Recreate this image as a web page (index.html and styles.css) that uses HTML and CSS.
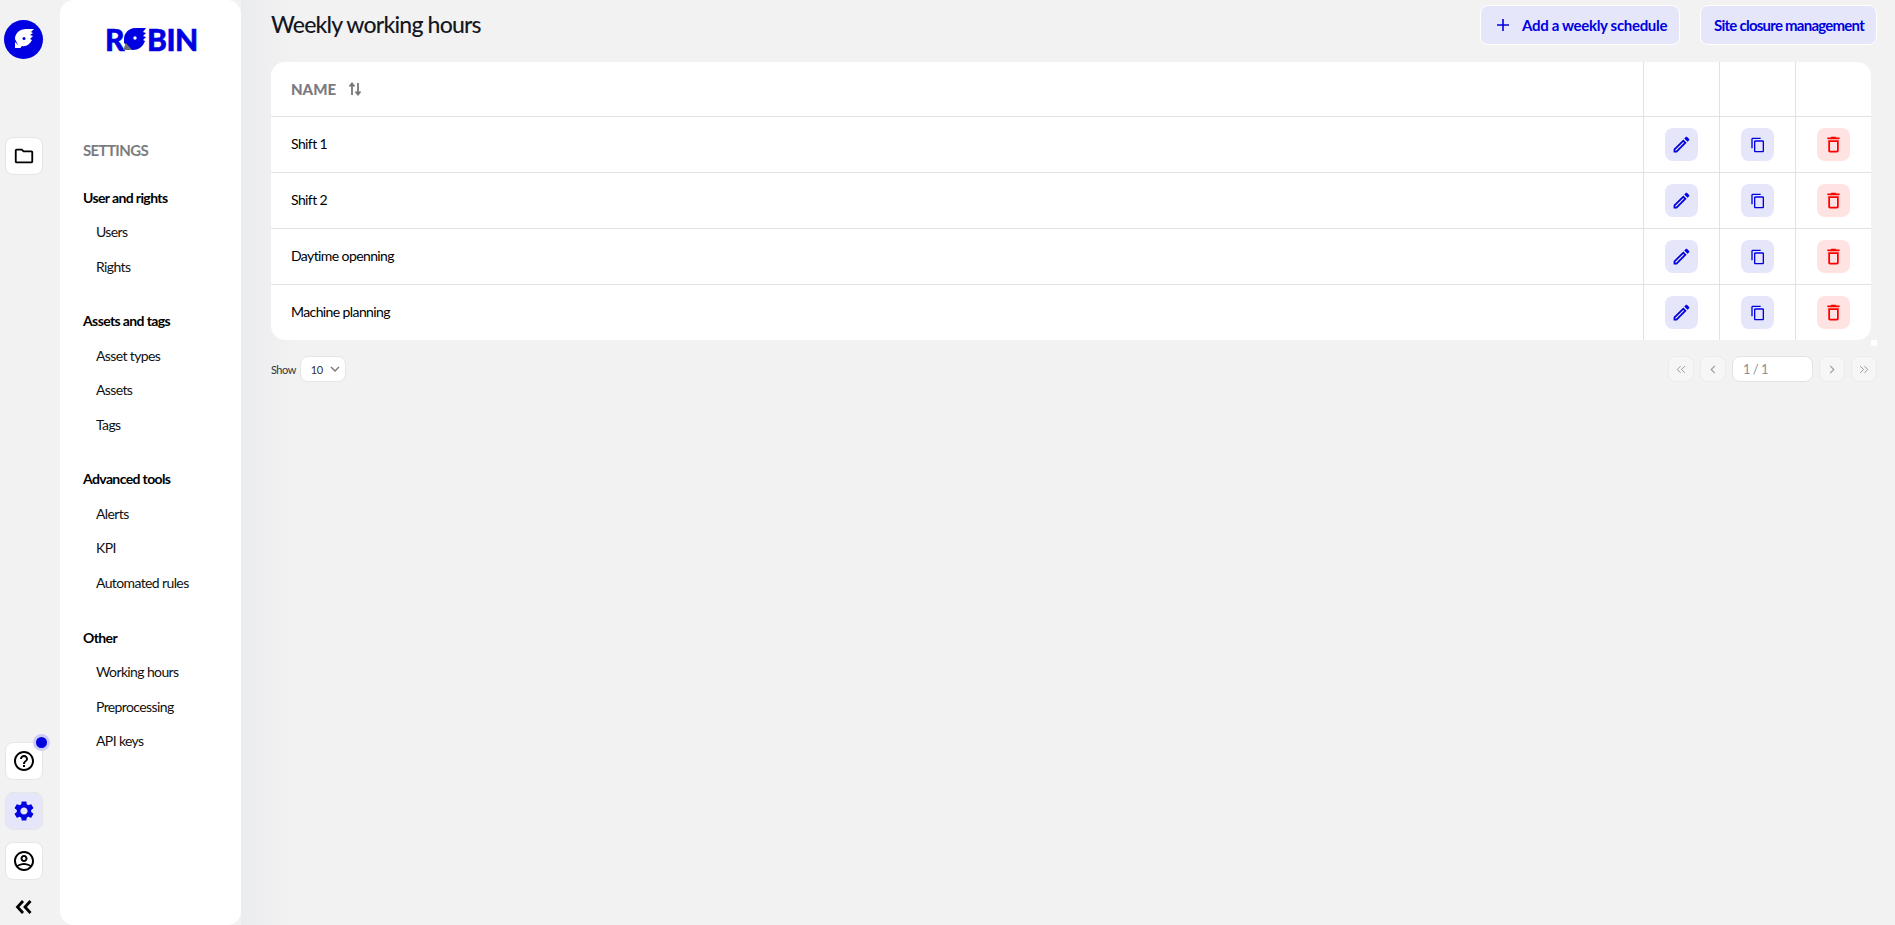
FILE: index.html
```html
<!DOCTYPE html>
<html lang="en">
<head>
    <meta charset="UTF-8">
    <title>Weekly working hours</title>
    <link rel="stylesheet" href="styles.css">
</head>
<body>
<div class="rail">
    <div class="railLogo">
        <svg viewBox="0 0 40 40" width="40" height="40"><circle cx="19.500" cy="19.500" r="19.500" fill="#0000e0"/><path d="M11 19C11 13 16 9 22 9h8l-3 3 2 1-3 2 3 1-3 3 2 1c-2 4-6 7-10 6l-2 2-1-1-3-6z" fill="#fff"/><path d="M11 22l6 6h-6z" fill="#fff"/><circle cx="20" cy="18.500" r="1.500" fill="#0000e0"/></svg>
    </div>
    <div class="railBtn railFolder">
        <svg viewBox="0 0 24 24" width="22" height="22"><path d="M20 6h-8l-2-2H4c-1.100 0-2 .9-2 2v12c0 1.100.9 2 2 2h16c1.100 0 2-.9 2-2V8c0-1.100-.9-2-2-2zm0 12H4V6h5.170l2 2H20v10z"/></svg>
    </div>
    <div class="railBtn railHelp">
        <span class="dot"></span>
        <svg viewBox="0 0 24 24" width="24" height="24"><path d="M11 18h2v-2h-2v2zm1-16C6.480 2 2 6.480 2 12s4.480 10 10 10 10-4.480 10-10S17.520 2 12 2zm0 18c-4.410 0-8-3.590-8-8s3.590-8 8-8 8 3.590 8 8-3.590 8-8 8zm0-14c-2.210 0-4 1.790-4 4h2c0-1.100.9-2 2-2s2 .9 2 2c0 2-3 1.750-3 5h2c0-2.250 3-2.500 3-5 0-2.210-1.790-4-4-4z"/></svg>
    </div>
    <div class="railBtn active">
        <svg viewBox="0 0 24 24" width="24" height="24"><path d="M19.140 12.940c.04-.3.06-.61.06-.94 0-.32-.02-.64-.07-.94l2.030-1.580c.18-.14.23-.41.12-.61l-1.920-3.320c-.12-.22-.37-.29-.59-.22l-2.390.96c-.5-.38-1.030-.7-1.620-.94l-.36-2.540c-.04-.24-.24-.41-.48-.41h-3.840c-.24 0-.43.17-.47.41l-.36 2.540c-.59.24-1.130.57-1.620.94l-2.390-.96c-.22-.08-.47 0-.59.22L2.740 8.870c-.12.21-.08.47.12.61l2.030 1.580c-.05.3-.09.63-.09.94s.02.64.07.94l-2.030 1.580c-.18.14-.23.41-.12.61l1.920 3.320c.12.22.37.29.59.22l2.390-.96c.5.38 1.030.7 1.620.94l.36 2.540c.05.24.24.41.48.41h3.840c.24 0 .44-.17.47-.41l.36-2.540c.59-.24 1.130-.56 1.620-.94l2.390.96c.22.08.47 0 .59-.22l1.920-3.320c.12-.22.07-.47-.12-.61l-2.010-1.580zM12 15.600c-1.980 0-3.600-1.620-3.600-3.600s1.620-3.600 3.600-3.600 3.600 1.620 3.600 3.600-1.620 3.600-3.600 3.600z"/></svg>
    </div>
    <div class="railBtn">
        <svg viewBox="0 0 24 24" width="24" height="24"><path d="M12 2C6.480 2 2 6.480 2 12s4.480 10 10 10 10-4.480 10-10S17.520 2 12 2zm0 2c4.410 0 8 3.590 8 8 0 1.600-.47 3.090-1.290 4.340C16.900 14.900 14.500 14 12 14s-4.900.9-6.710 2.340A7.960 7.960 0 0 1 4 12c0-4.410 3.590-8 8-8zm0 16c-2.300 0-4.370-.97-5.830-2.530C7.600 16.550 9.700 16 12 16s4.400.55 5.830 1.470A7.960 7.960 0 0 1 12 20zm0-14c-1.930 0-3.500 1.570-3.500 3.500S10.070 13 12 13s3.500-1.570 3.500-3.500S13.930 6 12 6zm0 5c-.83 0-1.500-.67-1.500-1.500S11.170 8 12 8s1.500.67 1.500 1.500S12.830 11 12 11z"/></svg>
    </div>
    <div class="railCollapse">
        <svg viewBox="0 0 18 14" width="18" height="14"><path d="M8 1L2.500 7 8 13M15.500 1L10 7l5.500 6" fill="none" stroke="#000" stroke-width="2.800"/></svg>
    </div>
</div>

<div class="sidebar">
    <div class="logo">
        <span>R</span>
        <svg class="logoO" viewBox="0 0 24 22" width="24" height="22"><path d="M1 11C1 5 6 0 12 0h11l-3 4 3 1-3 3 3 1-3 3 2 1c-2 6-7 9-12 9H9L1 15z" fill="#0000e0"/><circle cx="12" cy="10" r="1.700" fill="#fff"/><path d="M0 22l3-7 6 7z" fill="#6b7075"/></svg>
        <span>BIN</span>
    </div>
    <div class="navTitle">SETTINGS</div>
    <div class="navGroup">
        <div class="navHead">User and rights</div>
        <div class="navItem">Users</div>
        <div class="navItem">Rights</div>
    </div>
    <div class="navGroup">
        <div class="navHead">Assets and tags</div>
        <div class="navItem">Asset types</div>
        <div class="navItem">Assets</div>
        <div class="navItem">Tags</div>
    </div>
    <div class="navGroup">
        <div class="navHead">Advanced tools</div>
        <div class="navItem">Alerts</div>
        <div class="navItem">KPI</div>
        <div class="navItem">Automated rules</div>
    </div>
    <div class="navGroup">
        <div class="navHead">Other</div>
        <div class="navItem">Working hours</div>
        <div class="navItem">Preprocessing</div>
        <div class="navItem">API keys</div>
    </div>
</div>

<div class="main">
    <div class="topBar">
        <h1 class="title">Weekly working hours</h1>
        <div class="topBtn addBtn">
            <svg viewBox="0 0 14 14" width="14" height="14"><path d="M7 1v12M1 7h12" fill="none" stroke="#0000e0" stroke-width="1.600"/></svg>
            <span>Add a weekly schedule</span>
        </div>
        <div class="topBtn siteBtn">Site closure management</div>
    </div>

    <div class="tableBox">
        <span class="corner"></span>
        <div class="row headRow">
            <div class="nameCell">
                <span class="nameHead">NAME</span>
                <svg viewBox="0 0 14 14" width="14" height="14"><path d="M4 13V2M1.500 4.500L4 1.500l2.500 3M10 1v11M7.500 9.500l2.500 3 2.500-3" fill="none" stroke="#777" stroke-width="1.800"/></svg>
            </div>
            <div class="actCell"></div>
            <div class="actCell"></div>
            <div class="actCell"></div>
        </div>
        <div class="row">
            <div class="nameCell"><span class="rowName">Shift 1</span></div>
            <div class="actCell"><span class="actBtn"><svg viewBox="0 0 24 24"><path d="M14.060 9.020l.92.92L5.920 19H5v-.92l9.060-9.060M17.660 3c-.25 0-.51.1-.7.29l-1.830 1.830 3.750 3.750 1.830-1.830c.39-.39.39-1.020 0-1.410l-2.340-2.340c-.2-.2-.45-.29-.71-.29zm-3.600 3.190L3 17.250V21h3.750L17.810 9.940l-3.750-3.750z"/></svg></span></div>
            <div class="actCell"><span class="actBtn copy"><svg viewBox="0 0 24 24"><path d="M16 1H4c-1.100 0-2 .9-2 2v14h2V3h12V1zm3 4H8c-1.100 0-2 .9-2 2v14c0 1.100.9 2 2 2h11c1.100 0 2-.9 2-2V7c0-1.100-.9-2-2-2zm0 16H8V7h11v14z"/></svg></span></div>
            <div class="actCell"><span class="actBtn del"><svg viewBox="0 0 24 24"><path d="M6 19c0 1.100.9 2 2 2h8c1.100 0 2-.9 2-2V7H6v12zM8 9h8v10H8V9zm7.500-5l-1-1h-5l-1 1H5v2h14V4z"/></svg></span></div>
        </div>
        <div class="row">
            <div class="nameCell"><span class="rowName">Shift 2</span></div>
            <div class="actCell"><span class="actBtn"><svg viewBox="0 0 24 24"><path d="M14.060 9.020l.92.92L5.920 19H5v-.92l9.060-9.060M17.660 3c-.25 0-.51.1-.7.29l-1.830 1.830 3.750 3.750 1.830-1.830c.39-.39.39-1.020 0-1.410l-2.340-2.340c-.2-.2-.45-.29-.71-.29zm-3.600 3.190L3 17.250V21h3.750L17.810 9.940l-3.750-3.750z"/></svg></span></div>
            <div class="actCell"><span class="actBtn copy"><svg viewBox="0 0 24 24"><path d="M16 1H4c-1.100 0-2 .9-2 2v14h2V3h12V1zm3 4H8c-1.100 0-2 .9-2 2v14c0 1.100.9 2 2 2h11c1.100 0 2-.9 2-2V7c0-1.100-.9-2-2-2zm0 16H8V7h11v14z"/></svg></span></div>
            <div class="actCell"><span class="actBtn del"><svg viewBox="0 0 24 24"><path d="M6 19c0 1.100.9 2 2 2h8c1.100 0 2-.9 2-2V7H6v12zM8 9h8v10H8V9zm7.500-5l-1-1h-5l-1 1H5v2h14V4z"/></svg></span></div>
        </div>
        <div class="row">
            <div class="nameCell"><span class="rowName">Daytime openning</span></div>
            <div class="actCell"><span class="actBtn"><svg viewBox="0 0 24 24"><path d="M14.060 9.020l.92.92L5.920 19H5v-.92l9.060-9.060M17.660 3c-.25 0-.51.1-.7.29l-1.830 1.830 3.750 3.750 1.830-1.830c.39-.39.39-1.020 0-1.410l-2.340-2.340c-.2-.2-.45-.29-.71-.29zm-3.600 3.190L3 17.250V21h3.750L17.810 9.940l-3.750-3.750z"/></svg></span></div>
            <div class="actCell"><span class="actBtn copy"><svg viewBox="0 0 24 24"><path d="M16 1H4c-1.100 0-2 .9-2 2v14h2V3h12V1zm3 4H8c-1.100 0-2 .9-2 2v14c0 1.100.9 2 2 2h11c1.100 0 2-.9 2-2V7c0-1.100-.9-2-2-2zm0 16H8V7h11v14z"/></svg></span></div>
            <div class="actCell"><span class="actBtn del"><svg viewBox="0 0 24 24"><path d="M6 19c0 1.100.9 2 2 2h8c1.100 0 2-.9 2-2V7H6v12zM8 9h8v10H8V9zm7.500-5l-1-1h-5l-1 1H5v2h14V4z"/></svg></span></div>
        </div>
        <div class="row">
            <div class="nameCell"><span class="rowName">Machine planning</span></div>
            <div class="actCell"><span class="actBtn"><svg viewBox="0 0 24 24"><path d="M14.060 9.020l.92.92L5.920 19H5v-.92l9.060-9.060M17.660 3c-.25 0-.51.1-.7.29l-1.830 1.830 3.750 3.750 1.830-1.830c.39-.39.39-1.020 0-1.410l-2.340-2.340c-.2-.2-.45-.29-.71-.29zm-3.600 3.190L3 17.250V21h3.750L17.810 9.940l-3.750-3.750z"/></svg></span></div>
            <div class="actCell"><span class="actBtn copy"><svg viewBox="0 0 24 24"><path d="M16 1H4c-1.100 0-2 .9-2 2v14h2V3h12V1zm3 4H8c-1.100 0-2 .9-2 2v14c0 1.100.9 2 2 2h11c1.100 0 2-.9 2-2V7c0-1.100-.9-2-2-2zm0 16H8V7h11v14z"/></svg></span></div>
            <div class="actCell"><span class="actBtn del"><svg viewBox="0 0 24 24"><path d="M6 19c0 1.100.9 2 2 2h8c1.100 0 2-.9 2-2V7H6v12zM8 9h8v10H8V9zm7.500-5l-1-1h-5l-1 1H5v2h14V4z"/></svg></span></div>
        </div>
    </div>

    <div class="pager">
        <span class="showLabel">Show</span>
        <div class="showSelect">
            <span>10</span>
            <svg viewBox="0 0 10 6" width="10" height="6"><path d="M1 1l4 4 4-4" fill="none" stroke="#777" stroke-width="1.400"/></svg>
        </div>
        <div class="pageNav">
            <span class="pageBtn"><svg viewBox="0 0 12 10" width="10" height="9"><path d="M5.500 1L1.500 5l4 4M10.500 1l-4 4 4 4" fill="none" stroke="#999" stroke-width="1.200"/></svg></span>
            <span class="pageBtn"><svg viewBox="0 0 6 10" width="6" height="9"><path d="M5 1L1 5l4 4" fill="none" stroke="#999" stroke-width="1.200"/></svg></span>
            <span class="pageInput">1 / 1</span>
            <span class="pageBtn"><svg viewBox="0 0 6 10" width="6" height="9"><path d="M1 1l4 4-4 4" fill="none" stroke="#999" stroke-width="1.200"/></svg></span>
            <span class="pageBtn"><svg viewBox="0 0 12 10" width="10" height="9"><path d="M1.500 1l4 4-4 4M6.500 1l4 4-4 4" fill="none" stroke="#999" stroke-width="1.200"/></svg></span>
        </div>
    </div>
</div>
</body>
</html>
```

FILE: styles.css
```css
* {
    margin: 0;
    padding: 0;
    box-sizing: border-box;
}

html, body {
    height: 100%;
    overflow: hidden;
}

body {
    display: flex;
    background: #f2f2f2;
    color: #000;
    font-family: "Lato", "Liberation Sans", sans-serif;
}

/* left icon rail */
.rail {
    width: 60px;
    flex: none;
    display: flex;
    flex-direction: column;
    align-items: flex-start;
    padding: 20px 0 0 4px;
}

.railLogo {height: 40px;font-size: 0;}

.railBtn {
    position: relative;
    width: 38px;
    height: 38px;
    margin-left: 1px;
    margin-bottom: 12px;
    display: flex;
    align-items: center;
    justify-content: center;
    background: #fff;
    border: 1px solid #e6e6e6;
    border-radius: 8px;
}

.railBtn.active {background: #e6e6fb;fill: #0000e0;}

.railFolder {margin-top: 77px;margin-bottom: 0;}

.railHelp {margin-top: auto;}

.dot {
    position: absolute;
    top: -9px;
    right: -8px;
    width: 17px;
    height: 17px;
    background: #0000e0;
    border: 3px solid #ccccf6;
    border-radius: 50%;
}

.railCollapse {
    height: 25px;
    margin-left: 11px;
    margin-top: 8px;
    font-size: 0;
}

/* settings menu */
.sidebar {
    width: 181px;
    flex: none;
    height: 100%;
    padding: 0 0 0 23px;
    background: #fff;
    border-radius: 14px;
    letter-spacing: -.62px;
}

.logo {
    display: flex;
    align-items: center;
    height: 22px;
    margin: 28px 0 0 22px;
    color: #0000e0;
    font-size: 30px;
    font-weight: 900;
    line-height: 22px;
    letter-spacing: -.5px;
    -webkit-text-stroke: .5px #0000e0;
}

.logoO {margin: 0 0 0 -1px;flex: none;}

.navTitle {
    margin-top: 90px;
    color: #7c7c80;
    font-size: 15px;
    font-weight: 700;
    line-height: 20px;
}

.navGroup {margin-top: 27.5px;}

.navGroup + .navGroup {margin-top: 34.7px;}

.navHead {
    font-size: 14px;
    font-weight: 700;
    line-height: 20px;
    color: #000;
}

.navItem {
    margin: 14.5px 0 0 13px;
    font-size: 14px;
    line-height: 20px;
    color: #111;
}

/* main content */
.main {
    flex: 1;
    min-width: 0;
    height: 100%;
    padding: 0 18px 0 30px;
    background: linear-gradient(90deg, #ebecef 0, #f2f2f2 55px);
}

.topBar {
    display: flex;
    align-items: center;
    height: 62px;
    padding-bottom: 13px;
}

.title {
    flex: 1;
    font-size: 23px;
    font-weight: 500;
    letter-spacing: -.8px;
    color: #14171f;
    position: relative;
    top: -1px;
}

.topBtn {
    display: flex;
    align-items: center;
    height: 40px;
    padding: 0 12px 0 13px;
    margin-left: 20px;
    background: #e6e6fb;
    border: 1px solid #fff;
    border-radius: 8px;
    color: #0000e0;
    font-size: 15px;
    font-weight: 700;
}

.siteBtn {letter-spacing: -.76px;}

.addBtn {padding: 0 12px 0 15px;gap: 12px;letter-spacing: -.32px;}

.tableBox {
    position: relative;
    width: 1600px;
    background: #fff;
    border-radius: 14px;
}

.corner {
    position: absolute;
    right: -6px;
    bottom: -6px;
    width: 6px;
    height: 6px;
    background: #fff;
}

.row {
    display: flex;
    height: 56px;
    border-top: 1px solid #e2e2e2;
}

.headRow {height: 54px;border-top: 0;}

.nameCell {
    flex: 1;
    display: flex;
    align-items: center;
    padding-left: 20px;
    font-size: 14px;
    letter-spacing: -.6px;
    color: #000;
}

.rowName {margin-bottom: 2px;}

.nameHead {
    margin-right: 12px;
    color: #7a7a80;
    font-size: 15px;
    font-weight: 900;
    letter-spacing: 0;
}

.actCell {
    width: 76px;
    flex: none;
    display: flex;
    align-items: center;
    justify-content: center;
    border-left: 1px solid #e2e2e2;
}

.actBtn {
    width: 33px;
    height: 33px;
    display: flex;
    align-items: center;
    justify-content: center;
    background: #e6e6fb;
    border-radius: 8px;
    fill: #0000e0;
}

.actBtn svg {width: 21px;height: 21px;}

.actBtn.copy svg {width: 16px;height: 16px;}

.actBtn.del {background: #ffe3e3;fill: #f00;}

.pager {
    display: flex;
    align-items: center;
    margin-top: 16px;
    height: 26px;
}

.showLabel {
    font-size: 11px;
    letter-spacing: -.5px;
    margin-right: 4px;
    color: #333;
}

.showSelect {
    width: 46px;
    height: 26px;
    display: flex;
    align-items: center;
    justify-content: space-between;
    padding: 0 5px 0 10px;
    background: #fff;
    border: 1px solid #e6e6e6;
    border-radius: 8px;
    font-size: 11px;
    letter-spacing: -.5px;
    color: #333;
}

.pageNav {
    margin-left: auto;
    display: flex;
    gap: 6px;
}

.pageBtn {
    width: 26px;
    height: 26px;
    display: flex;
    align-items: center;
    justify-content: center;
    background: #f6f6f6;
    border: 1px solid #ececec;
    border-radius: 8px;
}

.pageInput {
    width: 81px;
    height: 26px;
    padding-left: 10px;
    background: #fff;
    border: 1px solid #e3e3e3;
    border-radius: 8px;
    font-size: 13px;
    letter-spacing: -.5px;
    line-height: 24px;
    color: #8a8f9a;
}
```
